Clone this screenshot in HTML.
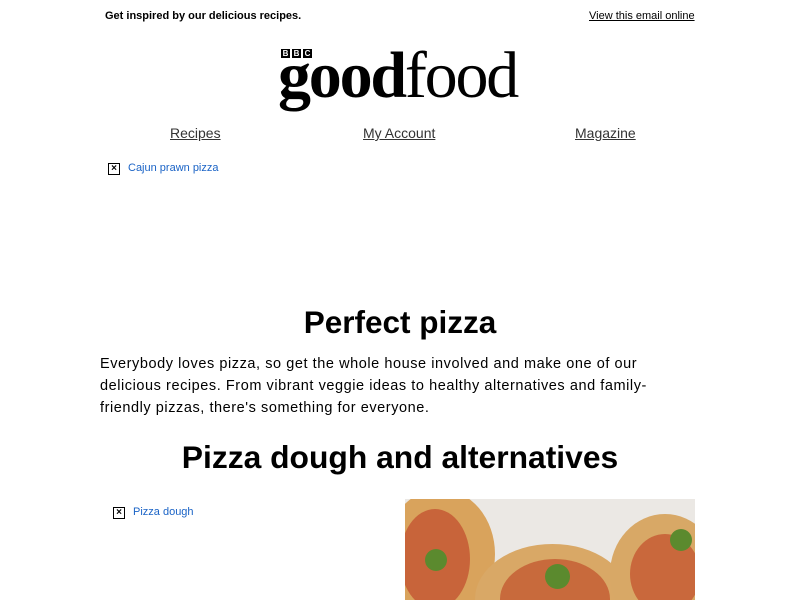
<!DOCTYPE html>
<html><head><style>
body{margin:0;background:#fff;font-family:"Liberation Sans",Arial,sans-serif;color:#000;width:800px;height:600px;overflow:hidden;position:relative}
.a{position:absolute}
.bi{position:absolute;width:12px;height:12px;border:1px solid #000;box-sizing:border-box;font-size:10px;line-height:10px;text-align:center;font-weight:bold}
.bl{position:absolute;color:#1a63c6;font-size:11px}
</style></head><body>
<div class="a" style="left:105px;top:10px;font-size:11px;font-weight:bold">Get inspired by our delicious recipes.</div>
<div class="a" style="left:589px;top:10px;font-size:11px;text-decoration:underline">View this email online</div>
<div class="a" style="left:281px;top:49px;display:flex;gap:2px;z-index:2">
<span style="background:#000;color:#fff;font-size:8px;font-weight:bold;width:9px;height:9px;line-height:9px;text-align:center">B</span>
<span style="background:#000;color:#fff;font-size:8px;font-weight:bold;width:9px;height:9px;line-height:9px;text-align:center">B</span>
<span style="background:#000;color:#fff;font-size:8px;font-weight:bold;width:9px;height:9px;line-height:9px;text-align:center">C</span></div>
<div class="a" style="left:278px;top:36px;font-family:'Liberation Serif',serif;font-size:66px;letter-spacing:-2.2px;line-height:80px"><b>good</b>food</div>
<div class="a" style="left:170px;top:125px;font-size:14px;color:#333;text-decoration:underline">Recipes</div>
<div class="a" style="left:363px;top:125px;font-size:14px;color:#333;text-decoration:underline">My Account</div>
<div class="a" style="left:575px;top:125px;font-size:14px;color:#333;text-decoration:underline">Magazine</div>
<div class="bi" style="left:108px;top:163px">×</div><div class="bl" style="left:128px;top:162px">Cajun prawn pizza</div>
<div class="a" style="left:0;width:800px;top:304px;text-align:center;font-size:31.5px;font-weight:bold">Perfect pizza</div>
<div class="a" style="left:100px;top:353px;width:565px;font-size:14.5px;line-height:22px;letter-spacing:0.56px">Everybody loves pizza, so get the whole house involved and make one of our delicious recipes. From vibrant veggie ideas to healthy alternatives and family-friendly pizzas, there's something for everyone.</div>
<div class="a" style="left:0;width:800px;top:439px;text-align:center;font-size:31.8px;font-weight:bold">Pizza dough and alternatives</div>
<div class="bi" style="left:113px;top:507px">×</div><div class="bl" style="left:133px;top:506px">Pizza dough</div>
<div class="a" style="left:405px;top:499px;width:290px;height:101px;background:#ebe8e4;overflow:hidden">
<div class="a" style="left:-20px;top:-10px;width:110px;height:130px;border-radius:50%;background:#d9a35c"></div>
<div class="a" style="left:-5px;top:10px;width:70px;height:100px;border-radius:50%;background:#c8643a"></div>
<div class="a" style="left:70px;top:45px;width:155px;height:110px;border-radius:50%;background:#d9a866"></div>
<div class="a" style="left:95px;top:60px;width:110px;height:80px;border-radius:50%;background:#c86a3c"></div>
<div class="a" style="left:205px;top:15px;width:110px;height:120px;border-radius:50%;background:#d8a866"></div>
<div class="a" style="left:225px;top:35px;width:70px;height:80px;border-radius:50%;background:#c9683c"></div>
<div class="a" style="left:140px;top:65px;width:25px;height:25px;border-radius:50%;background:#5b8a2e"></div>
<div class="a" style="left:265px;top:30px;width:22px;height:22px;border-radius:50%;background:#5b8a2e"></div>
<div class="a" style="left:20px;top:50px;width:22px;height:22px;border-radius:50%;background:#5b8a2e"></div>
</div>
</body></html>
